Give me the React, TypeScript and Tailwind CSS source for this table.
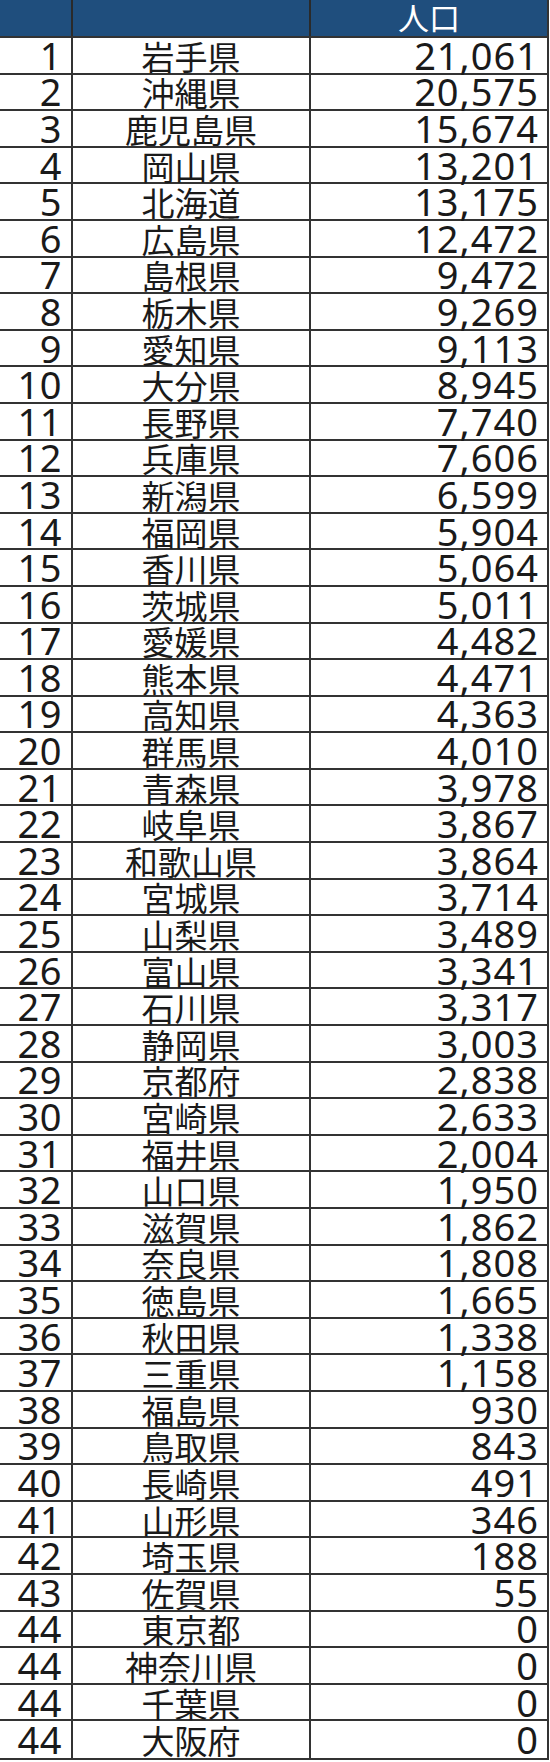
import React from 'react';

const rows: [string, string, string][] = [
  ['1', '岩手県', '21,061'],
  ['2', '沖縄県', '20,575'],
  ['3', '鹿児島県', '15,674'],
  ['4', '岡山県', '13,201'],
  ['5', '北海道', '13,175'],
  ['6', '広島県', '12,472'],
  ['7', '島根県', '9,472'],
  ['8', '栃木県', '9,269'],
  ['9', '愛知県', '9,113'],
  ['10', '大分県', '8,945'],
  ['11', '長野県', '7,740'],
  ['12', '兵庫県', '7,606'],
  ['13', '新潟県', '6,599'],
  ['14', '福岡県', '5,904'],
  ['15', '香川県', '5,064'],
  ['16', '茨城県', '5,011'],
  ['17', '愛媛県', '4,482'],
  ['18', '熊本県', '4,471'],
  ['19', '高知県', '4,363'],
  ['20', '群馬県', '4,010'],
  ['21', '青森県', '3,978'],
  ['22', '岐阜県', '3,867'],
  ['23', '和歌山県', '3,864'],
  ['24', '宮城県', '3,714'],
  ['25', '山梨県', '3,489'],
  ['26', '富山県', '3,341'],
  ['27', '石川県', '3,317'],
  ['28', '静岡県', '3,003'],
  ['29', '京都府', '2,838'],
  ['30', '宮崎県', '2,633'],
  ['31', '福井県', '2,004'],
  ['32', '山口県', '1,950'],
  ['33', '滋賀県', '1,862'],
  ['34', '奈良県', '1,808'],
  ['35', '徳島県', '1,665'],
  ['36', '秋田県', '1,338'],
  ['37', '三重県', '1,158'],
  ['38', '福島県', '930'],
  ['39', '鳥取県', '843'],
  ['40', '長崎県', '491'],
  ['41', '山形県', '346'],
  ['42', '埼玉県', '188'],
  ['43', '佐賀県', '55'],
  ['44', '東京都', '0'],
  ['44', '神奈川県', '0'],
  ['44', '千葉県', '0'],
  ['44', '大阪府', '0'],
];

const num = { fontFamily: '"Noto Sans", "Open Sans", sans-serif' };

const App: React.FC = () => {
  return (
    <div
      className="w-[550px] bg-white text-[#1a1a1a]"
      style={{ fontFamily: '"Noto Sans CJK JP", "Noto Sans", sans-serif' }}
    >
      <div className="w-[549px] border-r-2 border-b-2 border-[#333]">
        {/* Header */}
        <div className="grid grid-cols-[73px_238px_1fr] grid-rows-1 h-[38px] bg-[#1f4e7d] border-b-2 border-[#333] text-white">
          <div className="border-r-2 border-[#2a2a2a]"></div>
          <div className="border-r-2 border-[#2a2a2a]"></div>
          <div className="flex items-center justify-center text-[31px] leading-none pb-[3px]">人口</div>
        </div>

        {/* Body rows */}
        {rows.map(([rank, name, pop], i) => (
          <div
            key={i}
            className={`grid grid-cols-[73px_238px_1fr] grid-rows-1 h-[36.6px] ${
              i < rows.length - 1 ? 'border-b-2 border-[#333]' : ''
            }`}
          >
            <div
              className="min-h-0 border-r-2 border-[#333] flex items-center justify-end pr-[9px] text-[38px] leading-none tracking-[0.5px] pb-[1px]"
              style={num}
            >
              {rank}
            </div>
            <div className="min-h-0 border-r-2 border-[#333] flex items-center justify-center text-[33px] leading-none pt-[2px]">
              {name}
            </div>
            <div
              className="min-h-0 flex items-center justify-end pr-[8px] text-[38px] leading-none tracking-[1px] pb-[1px]"
              style={num}
            >
              {pop}
            </div>
          </div>
        ))}
      </div>
    </div>
  );
};

export default App;
